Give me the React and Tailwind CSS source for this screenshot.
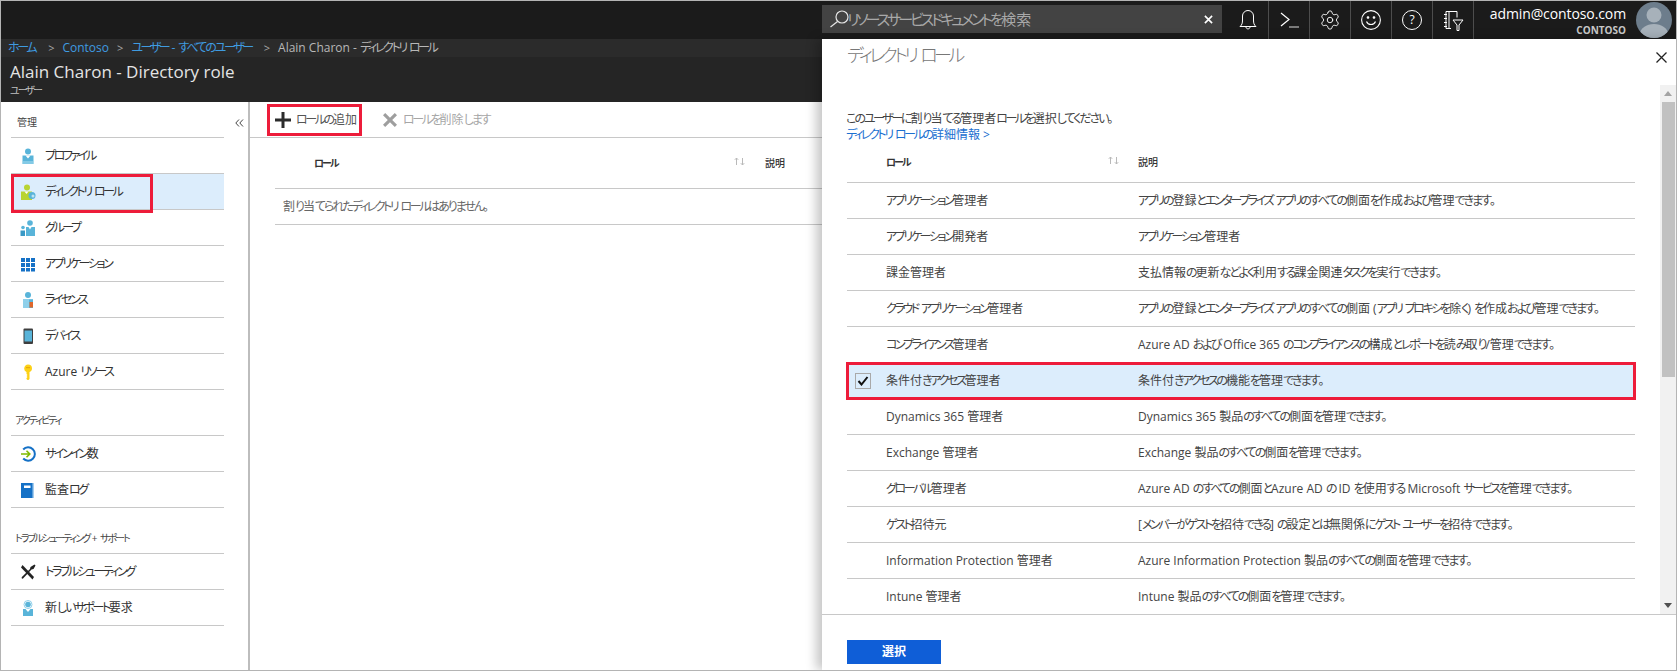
import { Settings } from 'lucide-react';

// Japanese UI font has narrow kana, so squeeze kana runs to get the same look
function Jp({ children }) {
  const parts = String(children).split(/([\u30A0-\u30FF]+|[\u3040-\u309F]+)/);
  return parts.map((p, i) => {
    if (/^[\u30A0-\u30FF]+$/.test(p)) return <span key={i} className="tracking-[-0.2em]">{p}</span>;
    if (/^[\u3040-\u309F]+$/.test(p)) return <span key={i} className="tracking-[-0.17em]">{p}</span>;
    return <span key={i}>{p}</span>;
  });
}

const Person = ({ fill = '#59b4d9' }) => (
  <>
    <circle cx="8" cy="3.5" r="3" fill={fill} />
    <path d="M2.5 7.5h11v8.5h-11z" fill={fill} />
    <path d="M5.5 7.5L8 10.5l2.5-3z" fill="#fff" />
    <path d="M2.5 13h11v3h-11z" fill="#a0d8ee" opacity=".6" />
  </>
);

const icons = {
  profile: <Person />,
  role: (
    <>
      <circle cx="7" cy="3.5" r="3" fill="#b8d432" />
      <path d="M1 7.5h11v8.5H1z" fill="#b8d432" />
      <path d="M4.5 7.5L6.5 10l2-2.5z" fill="#fff" />
      <circle cx="12" cy="11.5" r="3.5" fill="#59b4d9" />
      <circle cx="13" cy="12" r="1.5" fill="#bfe3f2" />
    </>
  ),
  group: (
    <>
      <circle cx="10" cy="3" r="2.8" fill="#59b4d9" />
      <path d="M6 7h9v9H6z" fill="#59b4d9" />
      <path d="M8.5 7l1.5 2.5L11.5 7z" fill="#fff" />
      <circle cx="3" cy="7.5" r="1.8" fill="#59b4d9" />
      <path d="M0.5 10.5h4.5V16H0.5z" fill="#3999c6" />
    </>
  ),
  apps: (
    <path
      d="M1 2h4v4H1zM6 2h4v4H6zM11 2h4v4h-4zM1 7h4v4H1zM6 7h4v4H6zM11 7h4v4h-4zM1 12h4v3.5H1zM6 12h4v3.5H6zM11 12h4v3.5h-4z"
      fill="#1571c6"
    />
  ),
  license: (
    <>
      <circle cx="8" cy="3" r="3" fill="#59b4d9" />
      <path d="M3 7h10v9H3z" fill="#8fd0ea" />
      <path d="M9 7.5h4V16H9z" fill="#59b4d9" />
      <path d="M9.5 10h3.5v5.5H9.5z" fill="#e0672a" />
    </>
  ),
  device: (
    <>
      <rect x="3.5" y="0.5" width="9.5" height="15.5" rx="1" fill="#3e3e3e" />
      <path d="M4.5 2.5h7.5v11H4.5z" fill="#59b4d9" />
    </>
  ),
  key: (
    <>
      <path d="M8 0.5a4 4 0 0 1 4 4c0 1.7-1 3-2.5 3.6V15L8 16.5 6.5 15v-1l1-1-1-1 1-1-1-1V8.1A4 4 0 0 1 8 .5z" fill="#fcd116" />
      <path d="M6 3h4v1.2H6z" fill="#e8a80c" />
    </>
  ),
  signin: (
    <>
      <path d="M3.2 3.5a6.7 6.7 0 1 1 0 9" fill="none" stroke="#1571c6" strokeWidth="2" />
      <path d="M1 8h8.5M6.5 4.8L9.8 8l-3.3 3.2" fill="none" stroke="#7fba00" strokeWidth="1.6" />
    </>
  ),
  audit: (
    <>
      <path d="M1 1h13v15H1z" fill="#1571c6" />
      <path d="M12.5 1H14v15h-1.5z" fill="#a5cdee" />
      <path d="M4 3.5h6.5v2.5H4z" fill="#fff" />
    </>
  ),
  tools: (
    <>
      <path d="M2.5 1L14 13l-1.5 2.5L1 3.5z" fill="#222" />
      <path d="M14.5 0.5l1 1-2 3.5-2 .5-8 8.5c-.8 1.6-2.6.3-1.6-1L10 5l.5-2z" fill="#222" />
    </>
  ),
  support: (
    <>
      <circle cx="8" cy="4.5" r="4" fill="none" stroke="#8fd0ea" strokeWidth="1" />
      <circle cx="8" cy="4.5" r="2.8" fill="#59b4d9" />
      <path d="M3 9h10v7H3z" fill="#59b4d9" />
      <path d="M5.5 9L8 12l2.5-3z" fill="#fff" />
    </>
  ),
};

function NavIcon({ name }) {
  return (
    <svg viewBox="0 0 16 16" className="w-4 h-4 shrink-0">
      {icons[name]}
    </svg>
  );
}

function SideHeader({ children, tall, x = 'pl-[4px]' }) {
  return (
    <div className={`ml-[10px] w-[213px] flex items-end border-b border-[#c8c8c8] pb-[8px] text-[10px] leading-[14px] text-[#444] ${tall ? 'h-[46px]' : 'h-[36px]'} ${x}`}>
      <span><Jp>{children}</Jp></span>
    </div>
  );
}

function SideItem({ icon, label, active }) {
  return (
    <div className={`relative ml-[10px] w-[213px] h-[36px] pl-[9px] flex items-center gap-[9px] border-b border-[#c8c8c8] text-[12px] text-[#333] ${active ? 'bg-[#dcedfc]' : ''}`}>
      <NavIcon name={icon} />
      <span><Jp>{label}</Jp></span>
      {active && <div className="absolute left-0 top-0 w-[142px] h-[39px] border-[3px] border-[#ed1c3a]" />}
    </div>
  );
}

function SortArrows({ className }) {
  return (
    <svg viewBox="0 0 11 9" className={`w-[11px] h-[9px] ${className}`} fill="none" stroke="#b9b9b9" strokeWidth="1">
      <path d="M2.5 8V1M.8 2.8L2.5 1l1.7 1.8M8.5 1v7M6.8 6.2L8.5 8l1.7-1.8" />
    </svg>
  );
}

const roles = [
  ['アプリケーション管理者', 'アプリの登録とエンタープライズ アプリのすべての側面を作成および管理できます。'],
  ['アプリケーション開発者', 'アプリケーション管理者'],
  ['課金管理者', '支払情報の更新などよく利用する課金関連タスクを実行できます。'],
  ['クラウド アプリケーション管理者', 'アプリの登録とエンタープライズ アプリのすべての側面 (アプリ プロキシを除く) を作成および管理できます。'],
  ['コンプライアンス管理者', 'Azure AD および Office 365 のコンプライアンスの構成とレポートを読み取り/管理できます。'],
  ['条件付きアクセス管理者', '条件付きアクセスの機能を管理できます。', true],
  ['Dynamics 365 管理者', 'Dynamics 365 製品のすべての側面を管理できます。'],
  ['Exchange 管理者', 'Exchange 製品のすべての側面を管理できます。'],
  ['グローバル管理者', 'Azure AD のすべての側面とAzure AD の ID を使用する Microsoft サービスを管理できます。'],
  ['ゲスト招待元', '[メンバーがゲストを招待できる] の設定とは無関係にゲスト ユーザーを招待できます。'],
  ['Information Protection 管理者', 'Azure Information Protection 製品のすべての側面を管理できます。'],
  ['Intune 管理者', 'Intune 製品のすべての側面を管理できます。'],
];

function TopIcon({ children }) {
  return (
    <div className="w-[41px] h-full flex items-center justify-center border-r border-[#4d4d4d]">
      {children}
    </div>
  );
}

export default function App() {
  return (
    <div className="w-[1677px] h-[671px] overflow-hidden flex flex-col bg-white border border-[#b4b4b4] font-['Open_Sans','Noto_Sans_CJK_JP',sans-serif] [font-feature-settings:'palt']">
      {/* top bar */}
      <div className="h-[38px] shrink-0 flex bg-[#1b1b1b] text-white">
        <div className="w-[821px] shrink-0" />
        <div className="w-[400px] h-[28px] mt-[4px] bg-[#434343] flex items-center relative">
          <svg viewBox="0 0 20 18" className="w-[20px] h-[18px] ml-[7px]" fill="none" stroke="#e6e6e6" strokeWidth="1.2">
            <circle cx="13" cy="7" r="6" />
            <path d="M8.5 11.5L1.5 17" />
          </svg>
          <span className="ml-[-2px] text-[15px] text-[#a8a8a8]"><Jp>リソースサービスドキュメントを検索</Jp></span>
          <svg viewBox="0 0 10 10" className="w-[9px] h-[9px] ml-auto mr-[9px]" stroke="#fff" strokeWidth="1.8">
            <path d="M1 1l8 8M9 1l-8 8" />
          </svg>
        </div>
        <div className="ml-[6px] h-[38px] flex">
          <TopIcon>
            <svg viewBox="0 0 18 22" className="w-[18px] h-[22px]" fill="none" stroke="#fff" strokeWidth="1">
              <path d="M1 17.5c2-1.5 2.5-3.5 2.5-6.5V7a5.5 5.5 0 0 1 11 0v4c0 3 .5 5 2.5 6.5z" />
              <path d="M7 18c0 2.500 4 2.500 4 0" />
            </svg>
          </TopIcon>
          <TopIcon>
            <svg viewBox="0 0 19 16" className="w-[19px] h-[16px]" fill="none" stroke="#fff" strokeWidth="1.200">
              <path d="M1 1l8 6.500L1 14" />
              <path d="M9 15h10" stroke="#bbb" />
            </svg>
          </TopIcon>
          <TopIcon>
            <Settings size={22} strokeWidth={1} color="#fff" />
          </TopIcon>
          <TopIcon>
            <svg viewBox="0 0 20 20" className="w-[20px] h-[20px]" fill="none" stroke="#fff" strokeWidth="1.100">
              <circle cx="10" cy="10" r="9.400" />
              <path d="M5.500 11.500c1.500 4 7.500 4 9 0" />
              <circle cx="7" cy="7.500" r=".8" fill="#fff" />
              <circle cx="13" cy="7.500" r=".8" fill="#fff" />
            </svg>
          </TopIcon>
          <TopIcon>
            <div className="w-[20px] h-[20px] rounded-full border border-white flex items-center justify-center text-[12px] leading-none">?</div>
          </TopIcon>
          <TopIcon>
            <svg viewBox="0 0 21 21" className="w-[21px] h-[21px]" fill="none" stroke="#fff" strokeWidth="1">
              <path d="M3 1.500h11v6M3 1.500v17h5" />
              <path d="M1 4.500h3M1 8.500h3M1 12.500h3M1 16.500h3M6 1.500v17" />
              <path d="M10 10h10l-4 5v5.500h-2V15z" />
            </svg>
          </TopIcon>
        </div>
        <div className="flex-1 flex justify-end items-center">
          <div className="text-right pt-[2px]">
            <div className="text-[14px] leading-[18px] tracking-[-0.1px] text-white">admin@contoso.com</div>
            <div className="text-[10px] leading-[14px] font-bold text-[#c8c8c8]">CONTOSO</div>
          </div>
          <svg viewBox="0 0 36 36" className="w-[36px] h-[36px] ml-[10px] mr-[4px]">
            <clipPath id="av"><circle cx="18" cy="18" r="18" /></clipPath>
            <g clipPath="url(#av)">
              <rect width="36" height="36" fill="#6d7d8c" />
              <circle cx="18" cy="13" r="7.500" fill="#a7b1ba" />
              <ellipse cx="18" cy="32" rx="14" ry="10" fill="#a7b1ba" />
            </g>
          </svg>
        </div>
      </div>

      <div className="flex-1 flex min-h-0">
        {/* left: resource blade behind the panel */}
        <div className="w-[821px] shrink-0 flex flex-col">
          <div className="h-[63px] shrink-0 bg-[#252525]">
            <div className="h-[18px] pl-[7px] bg-[#2b2b2b] flex items-center text-[12px] text-[#3f9be0] whitespace-nowrap">
              <span><Jp>ホーム</Jp></span>
              <span className="ml-[13px] text-[#aaa] text-[11px]">&gt;</span>
              <span className="ml-[8px]">Contoso</span>
              <span className="ml-[8px] text-[#aaa] text-[11px]">&gt;</span>
              <span className="ml-[8px]"><Jp>ユーザー - すべてのユーザー</Jp></span>
              <span className="ml-[12px] text-[#aaa] text-[11px]">&gt;</span>
              <span className="ml-[8px] text-[#b8b8b8]">Alain Charon - <Jp>ディレクトリ ロール</Jp></span>
            </div>
            <div className="pl-[9px] pt-[3px] text-[17px] leading-[24px] text-[#e4e4e4]">Alain Charon - Directory role</div>
            <div className="pl-[9px] text-[10px] leading-[12px] text-[#c0c0c0]"><Jp>ユーザー</Jp></div>
          </div>

          <div className="flex-1 flex min-h-0">
            <div className="relative w-[247px] shrink-0">
              <SideHeader x="pl-[6px]">管理</SideHeader>
              <svg viewBox="0 0 9 8" className="absolute left-[234px] top-[17px] w-[9px] h-[8px]" fill="none" stroke="#444" strokeWidth="1">
                <path d="M4 .5L.8 4 4 7.500M8 .5L4.800 4 8 7.500" />
              </svg>
              <SideItem icon="profile" label="プロファイル" />
              <SideItem icon="role" label="ディレクトリ ロール" active />
              <SideItem icon="group" label="グループ" />
              <SideItem icon="apps" label="アプリケーション" />
              <SideItem icon="license" label="ライセンス" />
              <SideItem icon="device" label="デバイス" />
              <SideItem icon="key" label="Azure リソース" />
              <SideHeader tall>アクティビティ</SideHeader>
              <SideItem icon="signin" label="サインイン数" />
              <SideItem icon="audit" label="監査ログ" />
              <SideHeader tall>トラブルシューティング + サポート</SideHeader>
              <SideItem icon="tools" label="トラブルシューティング" />
              <SideItem icon="support" label="新しいサポート要求" />
            </div>

            <div className="flex-1 min-w-0 border-l-2 border-[#bdbdbd]">
              <div className="h-[36px] border-b border-[#c8c8c8] flex items-center">
                <div className="ml-[17px] w-[95px] h-[32px] border-[3px] border-[#ed1c3a] flex items-center pl-[5px] text-[12px] text-[#555] whitespace-nowrap">
                  <svg viewBox="0 0 16 16" className="w-4 h-4 shrink-0" fill="#2b2b2b">
                    <path d="M6.500 0h3v6.500H16v3H9.500V16h-3V9.500H0v-3h6.500z" />
                  </svg>
                  <span className="ml-[5px]"><Jp>ロールの追加</Jp></span>
                </div>
                <svg viewBox="0 0 14 14" className="ml-[21px] w-[14px] h-[14px] shrink-0" fill="#9e9e9e">
                  <path d="M2.200 0L7 4.800 11.800 0 14 2.200 9.200 7 14 11.800 11.800 14 7 9.200 2.200 14 0 11.800 4.800 7 0 2.200z" />
                </svg>
                <span className="ml-[6px] text-[12px] text-[#a6a6a6] whitespace-nowrap"><Jp>ロールを削除します</Jp></span>
              </div>
              <div className="ml-[25px]">
                <div className="h-[51px] border-b border-[#c8c8c8] flex items-center pt-[-2px] text-[10px] font-bold text-[#333]">
                  <span className="ml-[39px] w-[420px]"><Jp>ロール</Jp></span>
                  <SortArrows className="mb-[4px]" />
                  <span className="ml-[20px] font-medium">説明</span>
                </div>
                <div className="h-[36px] border-b border-[#c8c8c8] flex items-center pl-[8px] text-[12px] text-[#666]">
                  <span><Jp>割り当てられたディレクトリ ロールはありません。</Jp></span>
                </div>
              </div>
            </div>
          </div>
        </div>

        {/* directory role panel */}
        <div className="relative z-10 flex-1 min-w-0 flex flex-col bg-white shadow-[-6px_0_10px_rgba(0,0,0,0.22)]">
          <div className="h-[46px] shrink-0 pl-[25px] pt-[3px] flex justify-between">
            <span className="text-[18px] leading-[26px] font-light text-[#777]"><Jp>ディレクトリ ロール</Jp></span>
            <svg viewBox="0 0 11 11" className="w-[11px] h-[11px] mt-[10px] mr-[9px]" stroke="#222" strokeWidth="1.300">
              <path d="M.5.5l10 10M10.500.5l-10 10" />
            </svg>
          </div>

          <div className="flex-1 min-h-0 flex">
            <div className="flex-1 min-w-0 pl-[25px] pr-[25px] overflow-hidden">
              <div className="pt-[26px] -ml-px text-[12px] leading-[16px] text-[#444]"><Jp>このユーザーに割り当てる管理者ロールを選択してください。</Jp></div>
              <div className="-ml-px text-[12px] leading-[16px] text-[#1a6fd0]"><Jp>ディレクトリ ロールの詳細情報 &gt;</Jp></div>
              <div className="h-[40px] border-b border-[#c8c8c8] flex items-center text-[10px] font-bold text-[#333] pt-[0px]">
                <span className="ml-[39px] w-[222px]"><Jp>ロール</Jp></span>
                <SortArrows className="mb-[4px]" />
                <span className="ml-[19px] font-medium">説明</span>
              </div>
              {roles.map(([role, desc, selected]) => (
                <div
                  key={role}
                  className={`h-[36px] flex items-center border-b border-[#c8c8c8] text-[12px] text-[#444] whitespace-nowrap ${selected ? 'bg-[#dcedfc] outline-[3px] outline-[#ed1c3a] -outline-offset-2 relative' : ''}`}
                >
                  <div className="w-[39px] shrink-0 pl-[8px]">
                    {selected && (
                      <div className="w-[16px] h-[16px] border border-[#a9a9a9] flex items-center justify-center">
                        <svg viewBox="0 0 12 10" className="w-[12px] h-[10px]" fill="none" stroke="#111" strokeWidth="2">
                          <path d="M1.500 5l3 3.500L10.500 1" />
                        </svg>
                      </div>
                    )}
                  </div>
                  <div className="w-[252px] shrink-0"><Jp>{role}</Jp></div>
                  <div><Jp>{desc}</Jp></div>
                </div>
              ))}
            </div>
            <div className="w-[16px] shrink-0 bg-[#f1f1f1] flex flex-col items-center">
              <div className="h-[17px] flex items-center justify-center text-[#a3a3a3]">
                <svg viewBox="0 0 8 5" className="w-[8px] h-[5px]" fill="currentColor"><path d="M4 0l4 5H0z" /></svg>
              </div>
              <div className="w-[13px] h-[275px] bg-[#c1c1c1]" />
              <div className="mt-auto h-[17px] flex items-center justify-center text-[#505050]">
                <svg viewBox="0 0 8 5" className="w-[8px] h-[5px]" fill="currentColor"><path d="M0 0h8L4 5z" /></svg>
              </div>
            </div>
          </div>

          <div className="h-[56px] shrink-0 border-t border-[#c8c8c8] pl-[25px] pt-[25px]">
            <div className="w-[94px] h-[24px] bg-[#0f5ed7] flex items-center justify-center text-[12px] font-bold text-white">選択</div>
          </div>
        </div>
      </div>
    </div>
  );
}
